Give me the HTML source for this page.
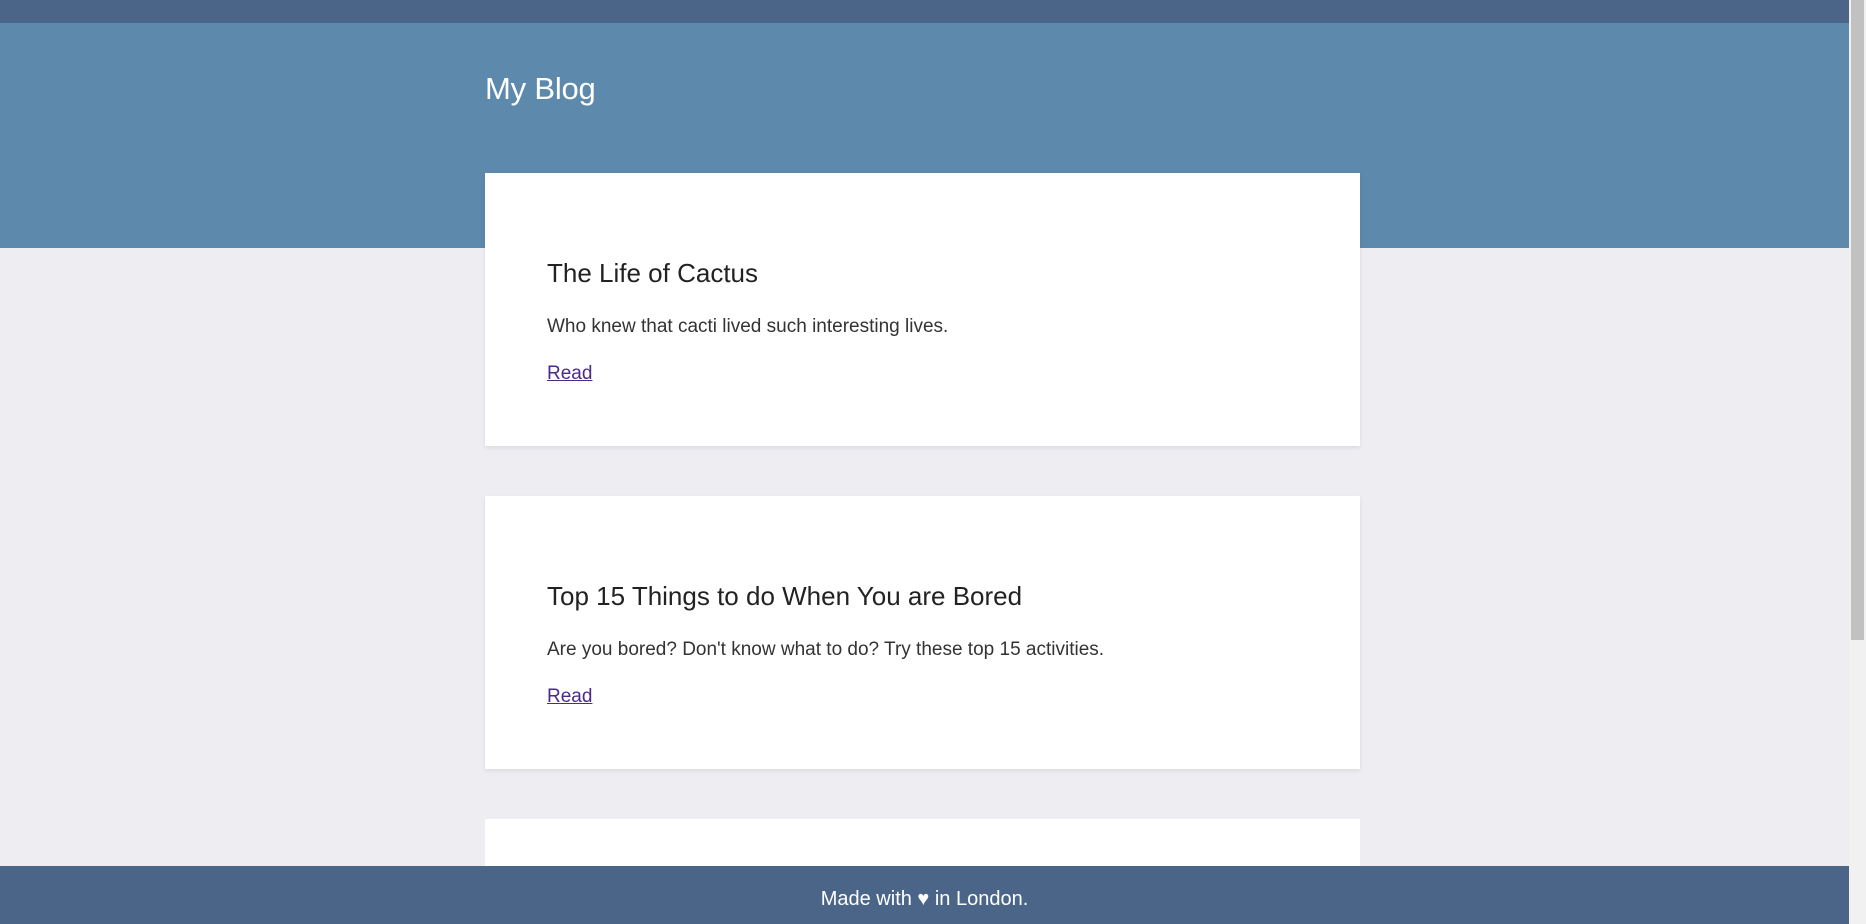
<!DOCTYPE html>
<html><head><style>
html,body{margin:0;padding:0;width:1866px;height:924px;overflow:hidden;}
body{background:#eeedf2;font-family:"Liberation Sans",sans-serif;position:relative;}
.top{position:absolute;left:0;top:0;width:1849px;height:23px;background:#4a6588;}
.hdr{position:absolute;left:0;top:23px;width:1849px;height:225px;background:#5c89ac;}
.hdr h1{position:absolute;left:485px;top:48px;margin:0;font-weight:normal;font-size:31px;color:#fff;letter-spacing:-0.2px;}
.card{position:absolute;left:485px;width:875px;height:273px;background:#fff;box-shadow:0 2px 4px rgba(0,0,0,0.08);}
.card h2{position:absolute;left:62px;top:85px;margin:0;font-weight:normal;font-size:26px;color:#222;}
.card p{position:absolute;left:62px;top:143px;margin:0;font-size:19px;color:#333;}
.card a{position:absolute;left:62px;top:190px;font-size:19px;color:#4b2a8a;text-decoration:underline;}
.foot{position:absolute;left:0;top:866px;width:1849px;height:58px;background:#4a6588;color:#fff;text-align:center;line-height:58px;font-size:20px;}
.foot span{position:relative;top:4px;}
.sb{position:absolute;left:1849px;top:0;width:17px;height:924px;background:#f1f1f1;}
.sb div{position:absolute;left:2px;top:0;width:13px;height:640px;background:#c1c1c1;}
</style></head><body>
<div class="top"></div>
<div class="hdr"><h1>My Blog</h1></div>
<div class="card" style="top:173px"><h2>The Life of Cactus</h2><p>Who knew that cacti lived such interesting lives.</p><a href="#">Read</a></div>
<div class="card" style="top:496px"><h2>Top 15 Things to do When You are Bored</h2><p>Are you bored? Don't know what to do? Try these top 15 activities.</p><a href="#">Read</a></div>
<div class="card" style="top:819px;height:105px;box-shadow:none"></div>
<div class="foot"><span>Made with ♥ in London.</span></div>
<div class="sb"><div></div></div>
</body></html>
